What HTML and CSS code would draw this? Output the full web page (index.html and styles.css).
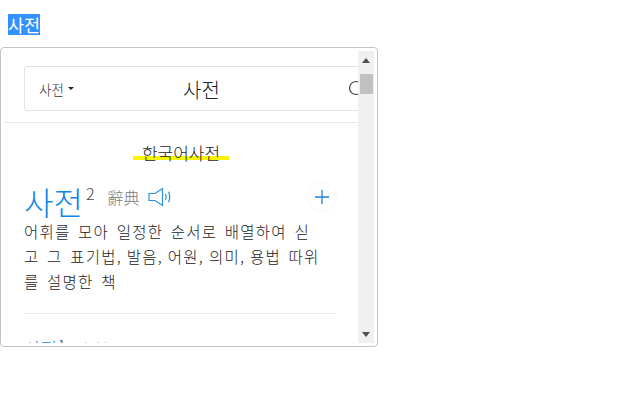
FILE: index.html
```html
<!DOCTYPE html>
<html lang="ko">
<head>
<meta charset="utf-8">
<title>사전</title>
<link rel="stylesheet" href="styles.css">
</head>
<body>
<div class="top"><span class="selected">사전</span></div>
<div class="card">
  <div class="viewport">
    <div class="search-wrap">
      <div class="search">
        <div class="scope">사전<span class="caret"></span></div>
        <div class="query">사전</div>
        <svg class="glass" width="18" height="18" viewBox="0 0 18 18"><circle cx="8" cy="8" r="6.5" fill="none" stroke="#444" stroke-width="1.2"/></svg>
      </div>
    </div>
    <div class="section">
      <div class="dict-title"><span class="mark">한국어사전</span></div>
      <div class="entry-head">
        <span class="word">사전</span><sup class="num">2</sup>
        <span class="hanja">辭典</span>
        <svg class="speaker" width="25" height="20" viewBox="0 0 25 20"><path d="M1 6.5h6L14.5 1.5v17L7 13.5H1z" fill="none" stroke="#2b8fe0" stroke-width="1.2"/><path d="M17.5 7q1.500 3 0 6M20.500 4.800q2.500 5.200 0 10.400" fill="none" stroke="#2b8fe0" stroke-width="1.200"/></svg>
        <button class="plus" type="button"><svg width="14" height="14" viewBox="0 0 14 14"><path d="M7 0v14M0 7h14" stroke="#1f80dc" stroke-width="1.300"/></svg></button>
      </div>
      <p class="def">어휘를 모아 일정한 순서로 배열하여 싣<br>고 그 표기법<span class="cm">,</span> 발음<span class="cm">,</span> 어원<span class="cm">,</span> 의미<span class="cm">,</span> 용법 따위<br>를 설명한 책</p>
      <hr class="rule">
      <div class="entry-next"><span class="word-small">사전</span><sup class="num-small">1</sup><span class="hanja-small">事前</span></div>
    </div>
  </div>
  <div class="scrollbar">
    <span class="arrow up"></span>
    <span class="thumb"></span>
    <span class="arrow down"></span>
  </div>
</div>
</body>
</html>
```
FILE: styles.css
```css
* { box-sizing: border-box; }
html, body { background: #fff; }
body {
  margin: 8px 8px 0 0;
  font-family: "Noto Sans CJK KR", "Noto Sans", sans-serif;
  color: #222;
}
.top { height: 39px; padding-left: 8px; font-size: 17.5px; line-height: 21px; padding-top: 6px; }
.selected { display: inline-block; background: #3390ff; color: #fff; height: 21px; }
.card {
  width: 378px;
  height: 300px;
  border: 1px solid #c4c4c4;
  border-radius: 4px;
  padding: 3px;
  display: flex;
  background: #fff;
}
.viewport { width: 354px; height: 292px; overflow: hidden; flex: none; }
.search-wrap { padding: 15px 0 11px 20px; border-bottom: 1px solid #e9e9e9; width: 354px; }
.search {
  width: 360px;
  height: 45px;
  border: 1px solid #e2e2e2;
  border-radius: 3px;
  display: flex;
  align-items: center;
  position: relative;
}
.scope { font-size: 13.5px; color: #333; padding-left: 14px; width: 158px; display: flex; align-items: center; font-weight: 300; }
.caret { width: 0; height: 0; border: 3px solid transparent; border-top: 3px solid #222; border-bottom: 0; margin-left: 4px; }
.query { font-size: 20px; font-weight: 300; color: #222; width: 165px; line-height: 26px; margin-top: 2px; }
.glass { position: absolute; left: 323px; top: 13px; }
.section { padding: 19px 20px 0 20px; }
.dict-title { text-align: center; height: 24px; font-size: 17px; line-height: 22px; color: #222; font-weight: 300; }
.mark {
  display: inline-block;
  width: 96px;
  background: linear-gradient(#f9f400, #f9f400) no-repeat 0 14px / 100% 4px;
}
.entry-head { display: flex; align-items: center; height: 44px; margin-top: 9px; }
.word { font-size: 32px; color: #0f87e8; line-height: 45px; margin-top: 8px; font-weight: 300; }
.num { font-size: 16px; color: #444; align-self: flex-start; margin: 7px 0 0 3px; line-height: 22px; vertical-align: baseline; font-weight: 300; }
.hanja { font-size: 16px; color: #777; margin-left: 13px; font-weight: 300; }
.speaker { margin-left: 9px; }
.plus {
  width: 30px; height: 30px; border-radius: 50%;
  border: 1px solid #f5f7f9; background: #fff; padding: 0;
  margin-left: auto; margin-right: 1px;
  display: flex; align-items: center; justify-content: center;
}
.def { margin: 0; width: 320px; font-size: 15.5px; line-height: 25px; color: #222; letter-spacing: 1.24px; word-spacing: 2px; white-space: nowrap; font-weight: 300; }
.cm { letter-spacing: -1.4px; }
.rule { border: 0; border-top: 1px solid #eee; margin: 19px 0 0 0; width: 313px; }
.entry-next { margin-top: 15px; font-size: 18px; line-height: 30px; white-space: nowrap; }
.word-small { color: #0f87e8; font-weight: 300; }
.num-small { font-size: 12px; color: #555; margin-left: 1px; }
.hanja-small { color: #777; font-size: 16px; margin-left: 13px; font-weight: 300; }
.scrollbar {
  width: 16px; height: 292px; background: #f0f0f0; flex: none;
  display: flex; flex-direction: column; align-items: center;
  padding: 7px 0 6px;
  margin-left: 0;
}
.arrow { width: 0; height: 0; border: 4px solid transparent; flex: none; }
.up { border-bottom: 5px solid #505050; border-top: 0; }
.down { border-top: 5px solid #505050; border-bottom: 0; margin-top: auto; }
.thumb { width: 13px; height: 20px; background: #c1c1c1; margin-top: 11px; flex: none; }
```
